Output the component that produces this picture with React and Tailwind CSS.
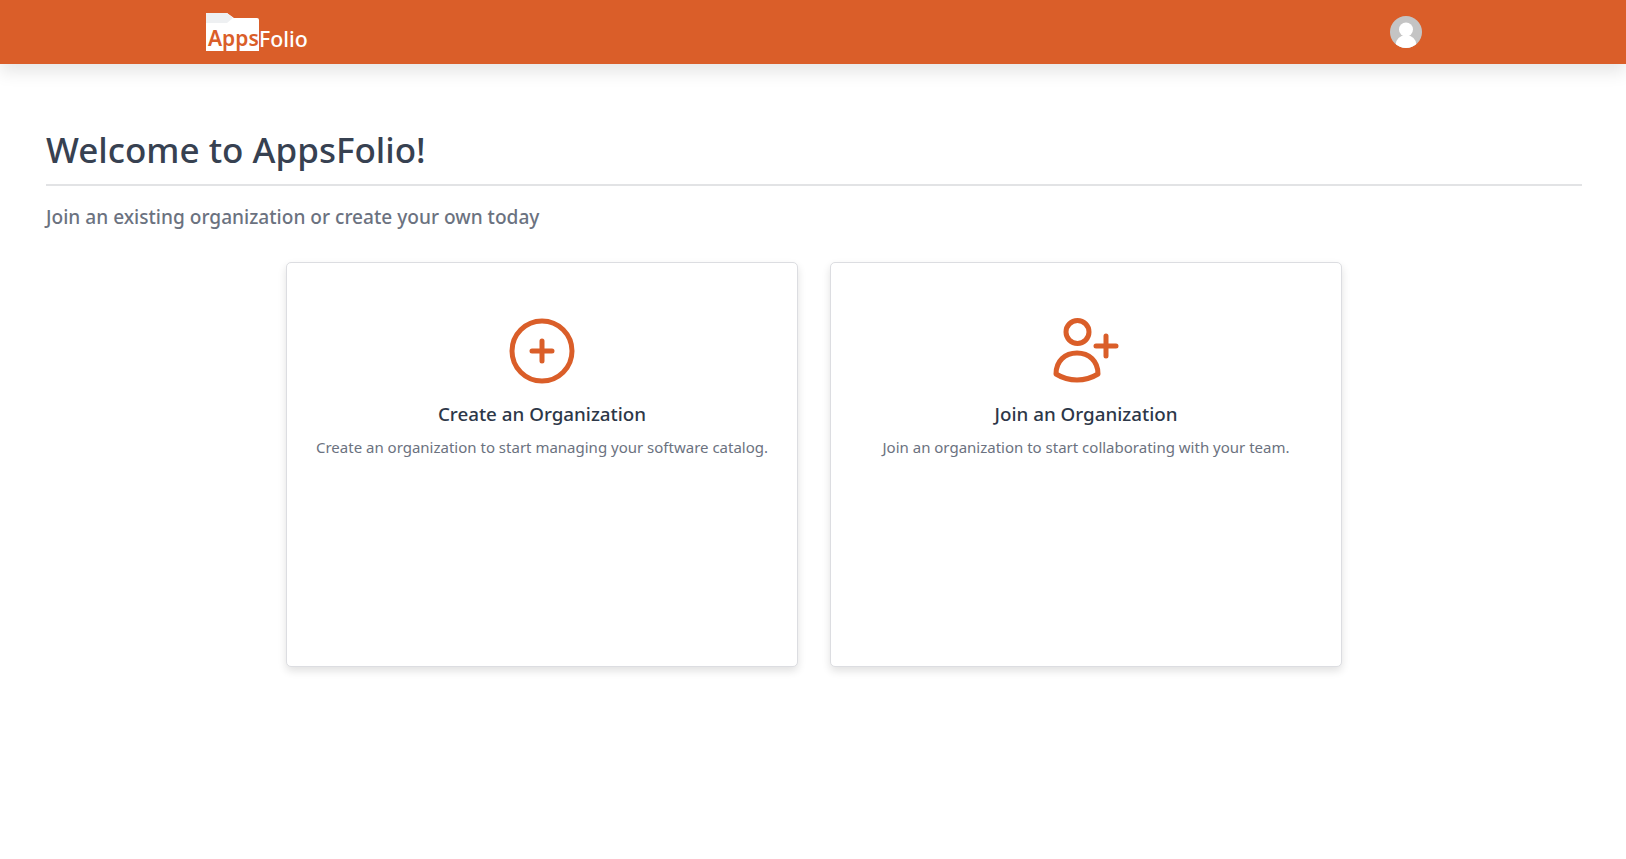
const FONT = { fontFamily: '"Noto Sans", sans-serif' };

const Logo = () => (
  <div className="flex items-end h-[38px] mt-[13px]">
    <div className="relative w-[53px] h-[38px]">
      <svg width="53" height="38" viewBox="0 0 53 38" className="absolute inset-0">
        <path d="M0 0H21L28 5H51a2 2 0 0 1 2 2V38H0Z" fill="#fff" />
        <path d="M0 0H21L27 5L21 10H0Z" fill="#eef0f2" />
      </svg>
      <span className="absolute left-[2px] bottom-[-1px] text-[21px] leading-[28px] font-semibold text-[#da5e29]">Apps</span>
    </div>
    <span className="relative top-[2px] text-[21.3px] leading-[28px] font-medium text-white">Folio</span>
  </div>
);

const Avatar = () => (
  <svg width="32" height="32" viewBox="0 0 32 32">
    <defs>
      <clipPath id="avatar-clip"><circle cx="16" cy="16" r="16" /></clipPath>
    </defs>
    <g clipPath="url(#avatar-clip)">
      <rect width="32" height="32" fill="#c4c4c4" />
      <circle cx="16" cy="13.5" r="7" fill="#fff" />
      <ellipse cx="16" cy="29" rx="10.5" ry="10" fill="#fff" />
    </g>
  </svg>
);

const PlusCircle = () => (
  <svg width="66" height="66" viewBox="0 0 66 66" fill="none" stroke="#da5e29" strokeWidth="5" strokeLinecap="round">
    <circle cx="33" cy="33" r="30" />
    <path d="M33 23V43M23 33H43" />
  </svg>
);

const UserPlus = () => (
  <svg width="66" height="66" viewBox="0 0 66 66" fill="none" stroke="#da5e29" strokeWidth="5" strokeLinecap="round" strokeLinejoin="round">
    <circle cx="24.5" cy="14" r="11.5" />
    <path d="M3 56C3 43 12 35 24 35C36 35 45 43 45 56C32 64 16 64 3 56Z" />
    <path d="M53 18V38M43 28H63" />
  </svg>
);

const Card = ({ icon, title, text }) => (
  <div className="flex flex-col items-center h-[405px] pt-[55px] bg-white border border-[#dcdde1] rounded-[5px] shadow-[0_4px_8px_rgba(0,0,0,0.12)]">
    {icon}
    <h3 className="mt-[16px] text-[18.8px] leading-[28px] font-medium text-[#2d3748]">{title}</h3>
    <p className="mt-[7px] text-[15px] leading-[24px] text-[#6b7280]">{text}</p>
  </div>
);

export default function App() {
  return (
    <div className="min-h-screen bg-white" style={FONT}>
      <header className="flex justify-between h-16 pl-[206px] pr-[204px] bg-[#da5e29] shadow-[0_8px_16px_rgba(0,0,0,0.1)]">
        <Logo />
        <div className="pt-4">
          <Avatar />
        </div>
      </header>

      <main className="pl-[46px] pr-[44px] pt-[62px]">
        <h1 className="pb-[10px] text-[35px] leading-[48px] font-medium text-[#374151] border-b-2 border-[#e2e3e5]">
          Welcome to AppsFolio!
        </h1>
        <p className="mt-[17px] text-[19.1px] leading-[28px] font-medium text-[#6b7280]">
          Join an existing organization or create your own today
        </p>
        <div className="grid grid-cols-2 gap-8 w-[1056px] mx-auto mt-[31px]">
          <Card
            icon={<PlusCircle />}
            title="Create an Organization"
            text="Create an organization to start managing your software catalog."
          />
          <Card
            icon={<UserPlus />}
            title="Join an Organization"
            text="Join an organization to start collaborating with your team."
          />
        </div>
      </main>
    </div>
  );
}
